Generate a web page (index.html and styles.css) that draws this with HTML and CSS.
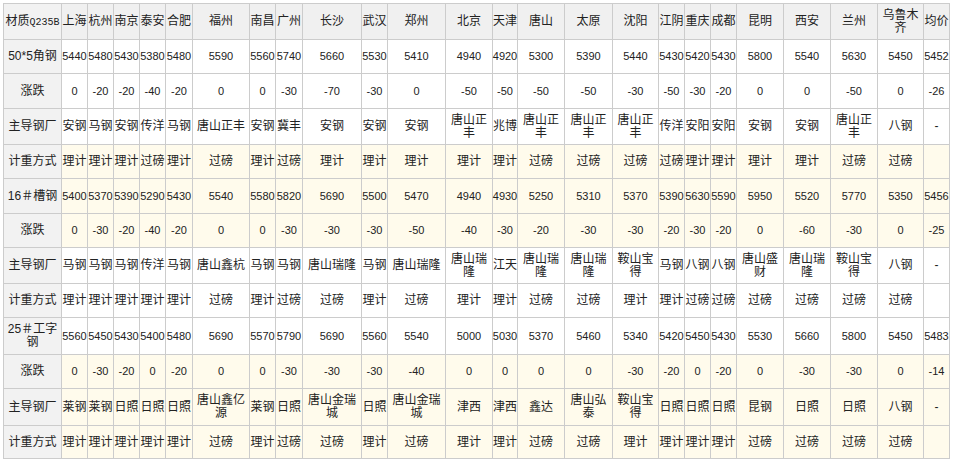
FILE: index.html
```html
<!DOCTYPE html>
<html lang="zh-CN">
<head>
<meta charset="utf-8">
<title>钢材价格</title>
<link rel="stylesheet" href="styles.css">
</head>
<body>
<div class="sheet">
  <div class="row head">
    <div class="c h"><span>材质<span class="code">Q235B</span></span></div>
    <div class="c">上海</div><div class="c">杭州</div><div class="c">南京</div><div class="c">泰安</div><div class="c">合肥</div><div class="c">福州</div><div class="c">南昌</div><div class="c">广州</div><div class="c">长沙</div><div class="c">武汉</div><div class="c">郑州</div><div class="c">北京</div><div class="c">天津</div><div class="c">唐山</div><div class="c">太原</div><div class="c">沈阳</div><div class="c">江阴</div><div class="c">重庆</div><div class="c">成都</div><div class="c">昆明</div><div class="c">西安</div><div class="c">兰州</div><div class="c">乌鲁木齐</div><div class="c">均价</div>
  </div>

  <div class="row num">
    <div class="c h">50*5角钢</div>
    <div class="c">5440</div><div class="c">5480</div><div class="c">5430</div><div class="c">5380</div><div class="c">5480</div><div class="c">5590</div><div class="c">5560</div><div class="c">5740</div><div class="c">5660</div><div class="c">5530</div><div class="c">5410</div><div class="c">4940</div><div class="c">4920</div><div class="c">5300</div><div class="c">5390</div><div class="c">5440</div><div class="c">5430</div><div class="c">5420</div><div class="c">5430</div><div class="c">5800</div><div class="c">5540</div><div class="c">5630</div><div class="c">5450</div><div class="c">5452</div>
  </div>
  <div class="row num">
    <div class="c h">涨跌</div>
    <div class="c">0</div><div class="c">-20</div><div class="c">-20</div><div class="c">-40</div><div class="c">-20</div><div class="c">0</div><div class="c">0</div><div class="c">-30</div><div class="c">-70</div><div class="c">-30</div><div class="c">0</div><div class="c">-50</div><div class="c">-50</div><div class="c">-50</div><div class="c">-50</div><div class="c">-30</div><div class="c">-50</div><div class="c">-30</div><div class="c">-20</div><div class="c">0</div><div class="c">0</div><div class="c">-50</div><div class="c">0</div><div class="c">-26</div>
  </div>
  <div class="row">
    <div class="c h">主导钢厂</div>
    <div class="c">安钢</div><div class="c">马钢</div><div class="c">安钢</div><div class="c">传洋</div><div class="c">马钢</div><div class="c">唐山正丰</div><div class="c">安钢</div><div class="c">冀丰</div><div class="c">安钢</div><div class="c">安钢</div><div class="c">安钢</div><div class="c">唐山正丰</div><div class="c">兆博</div><div class="c">唐山正丰</div><div class="c">唐山正丰</div><div class="c">唐山正丰</div><div class="c">传洋</div><div class="c">安阳</div><div class="c">安阳</div><div class="c">安钢</div><div class="c">安钢</div><div class="c">唐山正丰</div><div class="c">八钢</div><div class="c">-</div>
  </div>
  <div class="row hl">
    <div class="c h">计重方式</div>
    <div class="c">理计</div><div class="c">理计</div><div class="c">理计</div><div class="c">过磅</div><div class="c">理计</div><div class="c">过磅</div><div class="c">理计</div><div class="c">过磅</div><div class="c">理计</div><div class="c">理计</div><div class="c">理计</div><div class="c">理计</div><div class="c">理计</div><div class="c">过磅</div><div class="c">过磅</div><div class="c">过磅</div><div class="c">过磅</div><div class="c">理计</div><div class="c">理计</div><div class="c">理计</div><div class="c">理计</div><div class="c">过磅</div><div class="c">过磅</div><div class="c"></div>
  </div>

  <div class="row num hl">
    <div class="c h">16＃槽钢</div>
    <div class="c">5400</div><div class="c">5370</div><div class="c">5390</div><div class="c">5290</div><div class="c">5430</div><div class="c">5540</div><div class="c">5580</div><div class="c">5820</div><div class="c">5690</div><div class="c">5500</div><div class="c">5470</div><div class="c">4940</div><div class="c">4930</div><div class="c">5250</div><div class="c">5310</div><div class="c">5370</div><div class="c">5390</div><div class="c">5630</div><div class="c">5590</div><div class="c">5950</div><div class="c">5520</div><div class="c">5770</div><div class="c">5350</div><div class="c">5456</div>
  </div>
  <div class="row num hl">
    <div class="c h">涨跌</div>
    <div class="c">0</div><div class="c">-30</div><div class="c">-20</div><div class="c">-40</div><div class="c">-20</div><div class="c">0</div><div class="c">0</div><div class="c">-30</div><div class="c">-30</div><div class="c">-30</div><div class="c">-50</div><div class="c">-40</div><div class="c">-30</div><div class="c">-20</div><div class="c">-30</div><div class="c">-30</div><div class="c">-20</div><div class="c">-30</div><div class="c">-20</div><div class="c">0</div><div class="c">-60</div><div class="c">-30</div><div class="c">0</div><div class="c">-25</div>
  </div>
  <div class="row">
    <div class="c h">主导钢厂</div>
    <div class="c">马钢</div><div class="c">马钢</div><div class="c">马钢</div><div class="c">传洋</div><div class="c">马钢</div><div class="c">唐山鑫杭</div><div class="c">马钢</div><div class="c">马钢</div><div class="c">唐山瑞隆</div><div class="c">马钢</div><div class="c">唐山瑞隆</div><div class="c">唐山瑞隆</div><div class="c">江天</div><div class="c">唐山瑞隆</div><div class="c">唐山瑞隆</div><div class="c">鞍山宝得</div><div class="c">马钢</div><div class="c">八钢</div><div class="c">八钢</div><div class="c">唐山盛财</div><div class="c">唐山瑞隆</div><div class="c">鞍山宝得</div><div class="c">八钢</div><div class="c">-</div>
  </div>
  <div class="row">
    <div class="c h">计重方式</div>
    <div class="c">理计</div><div class="c">理计</div><div class="c">理计</div><div class="c">理计</div><div class="c">理计</div><div class="c">过磅</div><div class="c">理计</div><div class="c">过磅</div><div class="c">过磅</div><div class="c">理计</div><div class="c">过磅</div><div class="c">理计</div><div class="c">理计</div><div class="c">过磅</div><div class="c">过磅</div><div class="c">理计</div><div class="c">理计</div><div class="c">过磅</div><div class="c">过磅</div><div class="c">过磅</div><div class="c">过磅</div><div class="c">过磅</div><div class="c">过磅</div><div class="c"></div>
  </div>

  <div class="row num">
    <div class="c h">25＃工字钢</div>
    <div class="c">5560</div><div class="c">5450</div><div class="c">5430</div><div class="c">5400</div><div class="c">5480</div><div class="c">5690</div><div class="c">5570</div><div class="c">5790</div><div class="c">5690</div><div class="c">5560</div><div class="c">5540</div><div class="c">5000</div><div class="c">5030</div><div class="c">5370</div><div class="c">5460</div><div class="c">5340</div><div class="c">5420</div><div class="c">5450</div><div class="c">5430</div><div class="c">5530</div><div class="c">5660</div><div class="c">5800</div><div class="c">5450</div><div class="c">5483</div>
  </div>
  <div class="row num hl">
    <div class="c h">涨跌</div>
    <div class="c">0</div><div class="c">-30</div><div class="c">-20</div><div class="c">0</div><div class="c">-20</div><div class="c">0</div><div class="c">0</div><div class="c">-30</div><div class="c">-30</div><div class="c">-30</div><div class="c">-40</div><div class="c">0</div><div class="c">0</div><div class="c">0</div><div class="c">0</div><div class="c">-30</div><div class="c">-20</div><div class="c">0</div><div class="c">-20</div><div class="c">0</div><div class="c">-30</div><div class="c">-30</div><div class="c">0</div><div class="c">-14</div>
  </div>
  <div class="row hl">
    <div class="c h">主导钢厂</div>
    <div class="c">莱钢</div><div class="c">莱钢</div><div class="c">日照</div><div class="c">日照</div><div class="c">日照</div><div class="c">唐山鑫亿源</div><div class="c">莱钢</div><div class="c">日照</div><div class="c">唐山金瑞城</div><div class="c">日照</div><div class="c">唐山金瑞城</div><div class="c">津西</div><div class="c">津西</div><div class="c">鑫达</div><div class="c">唐山弘泰</div><div class="c">鞍山宝得</div><div class="c">日照</div><div class="c">日照</div><div class="c">日照</div><div class="c">昆钢</div><div class="c">日照</div><div class="c">日照</div><div class="c">八钢</div><div class="c">-</div>
  </div>
  <div class="row hl">
    <div class="c h">计重方式</div>
    <div class="c">理计</div><div class="c">理计</div><div class="c">理计</div><div class="c">理计</div><div class="c">理计</div><div class="c">过磅</div><div class="c">理计</div><div class="c">过磅</div><div class="c">过磅</div><div class="c">理计</div><div class="c">过磅</div><div class="c">理计</div><div class="c">理计</div><div class="c">过磅</div><div class="c">过磅</div><div class="c">理计</div><div class="c">理计</div><div class="c">理计</div><div class="c">理计</div><div class="c">过磅</div><div class="c">过磅</div><div class="c">过磅</div><div class="c">过磅</div><div class="c"></div>
  </div>
</div>
</body>
</html>
```

FILE: styles.css
```css
html, body {
  margin: 0;
  padding: 0;
  background: #ffffff;
}

body {
  padding: 3px;
  font-family: "Liberation Sans", "Noto Sans CJK SC", sans-serif;
  font-size: 12px;
  color: #222222;
}

.sheet {
  display: grid;
  width: 946px;
  grid-template-columns: 58px 26px 26px 26px 26px 27px 57px 26px 27px 59px 26px 58px 47px 25px 47px 48px 46px 26px 26px 26px 47px 47px 47px 46px 26px;
  grid-template-rows: 36px 34px 35px 36px 34px 35px 34px 36px 34px 37px 34px 37px 33px;
  border-top: 1px solid #cccccc;
  border-left: 1px solid #cccccc;
}

.row {
  display: contents;
}

.c {
  box-sizing: border-box;
  display: flex;
  align-items: center;
  justify-content: center;
  text-align: center;
  line-height: 13px;
  padding: 0;
  border-right: 1px solid #cccccc;
  border-bottom: 1px solid #cccccc;
  background: #ffffff;
  overflow: visible;
}

.hl > .c {
  background: #fffbec;
}

.head > .c {
  background: #f0f0f0;
}

.c.h,
.hl > .c.h {
  background: #f2f2f2;
}

.num > .c {
  font-size: 11px;
}

.num > .c.h {
  font-size: 12px;
}

.code {
  font-family: "Liberation Mono", monospace;
  font-size: 10px;
  white-space: nowrap;
}
```
